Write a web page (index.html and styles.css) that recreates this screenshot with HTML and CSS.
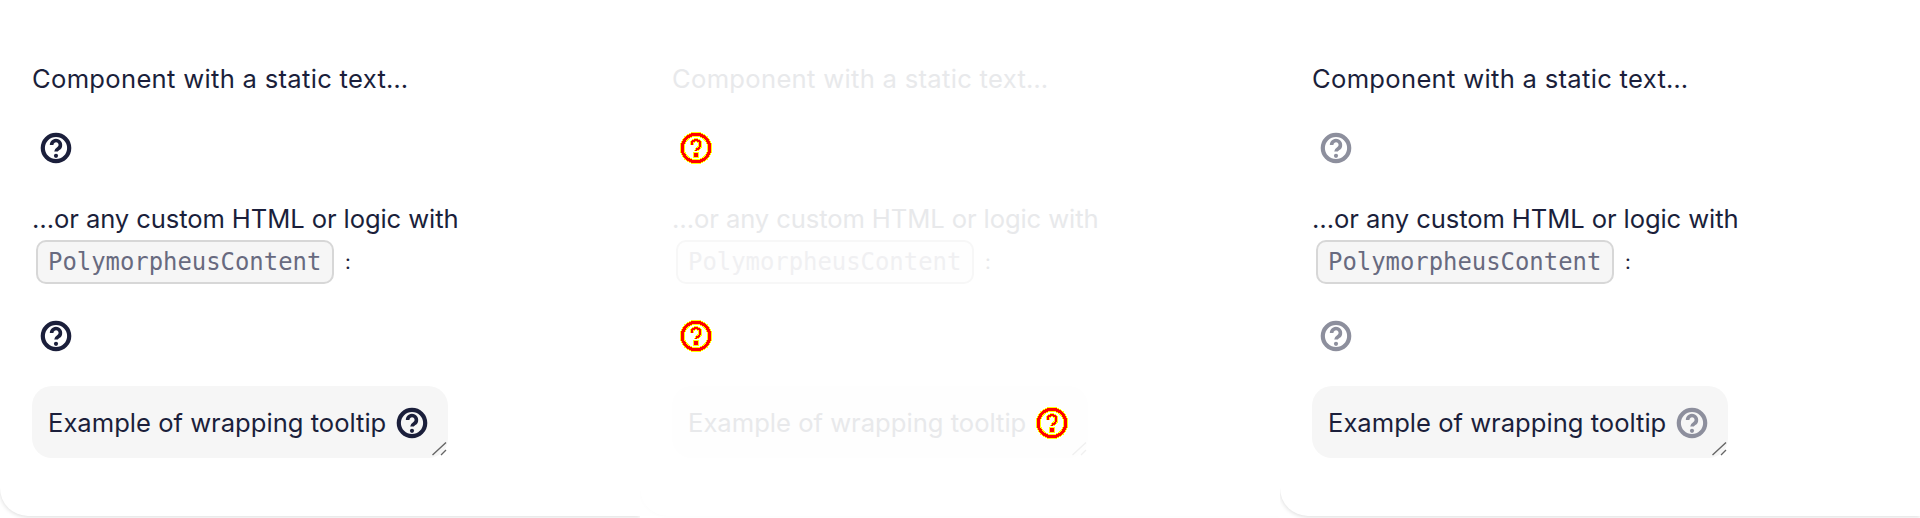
FILE: index.html
```html
<!DOCTYPE html>
<html lang="en">
<head>
    <meta charset="UTF-8">
    <title>Hint</title>
    <link rel="stylesheet" href="styles.css">
</head>
<body>
<svg class="sprite" xmlns="http://www.w3.org/2000/svg">
    <symbol id="help" viewBox="0 0 32 32">
        <circle cx="16" cy="16" r="13.2" fill="none" stroke="currentColor" stroke-width="4.2"/>
        <path d="M11.6 13a4.4 4.4 0 1 1 6.8 3.6c-1.5 1-2.4 1.6-2.4 3" fill="none" stroke="currentColor" stroke-width="3.6"/>
        <circle cx="16" cy="23.8" r="2.1" fill="currentColor"/>
    </symbol>
    <symbol id="help-forced" viewBox="0 0 32 32">
        <circle cx="16" cy="16" r="13.8" fill="none" stroke="#ff0" stroke-width="5" shape-rendering="crispEdges"/>
        <circle cx="16" cy="16" r="13.8" fill="none" stroke="#f00" stroke-width="3" shape-rendering="crispEdges"/>
        <path d="M11.6 12.6a4.4 4.4 0 1 1 6.8 3.6c-1.5 1-2.4 1.6-2.4 3" fill="none" stroke="#ff0" stroke-width="4" shape-rendering="crispEdges"/>
        <path d="M11.6 12.6a4.4 4.4 0 1 1 6.8 3.6c-1.5 1-2.4 1.6-2.4 3" fill="none" stroke="#f00" stroke-width="2.2" shape-rendering="crispEdges"/>
        <rect x="13" y="20" width="6" height="6" fill="#ff0" shape-rendering="crispEdges"/>
        <rect x="14" y="21" width="4" height="4" fill="#f00" shape-rendering="crispEdges"/>
    </symbol>
</svg>

<div class="panels">
    <!-- normal -->
    <div class="cell">
        <div class="panel">
            <p class="line line-static">Component with a static text…</p>
            <svg class="hint hint-first"><use href="#help"/></svg>
            <p class="line line-custom">…or any custom HTML or logic with</p>
            <p class="code-row"><code class="code">PolymorpheusContent</code><span class="colon">:</span></p>
            <svg class="hint hint-second"><use href="#help"/></svg>
            <div class="box">
                <span class="box-text">Example of wrapping tooltip</span>
                <svg class="hint-inline"><use href="#help"/></svg>
                <svg class="grip" viewBox="0 0 16 16"><path d="M.5 13 14 .5M9 13l5-5"/></svg>
            </div>
        </div>
    </div>

    <!-- disabled -->
    <div class="cell">
        <div class="panel panel-disabled">
            <p class="line line-static">Component with a static text…</p>
            <svg class="hint hint-first"><use href="#help-forced"/></svg>
            <p class="line line-custom">…or any custom HTML or logic with</p>
            <p class="code-row"><code class="code">PolymorpheusContent</code><span class="colon">:</span></p>
            <svg class="hint hint-second"><use href="#help-forced"/></svg>
            <div class="box">
                <span class="box-text">Example of wrapping tooltip</span>
                <svg class="hint-inline"><use href="#help-forced"/></svg>
                <svg class="grip" viewBox="0 0 16 16"><path d="M.5 13 14 .5M9 13l5-5"/></svg>
            </div>
        </div>
    </div>

    <!-- muted icons -->
    <div class="cell">
        <div class="panel panel-muted">
            <p class="line line-static">Component with a static text…</p>
            <svg class="hint hint-first"><use href="#help"/></svg>
            <p class="line line-custom">…or any custom HTML or logic with</p>
            <p class="code-row"><code class="code">PolymorpheusContent</code><span class="colon">:</span></p>
            <svg class="hint hint-second"><use href="#help"/></svg>
            <div class="box">
                <span class="box-text">Example of wrapping tooltip</span>
                <svg class="hint-inline"><use href="#help"/></svg>
                <svg class="grip" viewBox="0 0 16 16"><path d="M.5 13 14 .5M9 13l5-5"/></svg>
            </div>
        </div>
    </div>
</div>
</body>
</html>
```

FILE: styles.css
```css
* {
    margin: 0;
    padding: 0;
    box-sizing: border-box;
}

body {
    background-color: #fff;
    color: #1b1f3b;
    font-family: Inter, "Noto Sans", sans-serif;
    overflow: hidden;
}

.sprite {
    display: none;
}

.panels {
    display: grid;
    grid-template-columns: repeat(3, 640px);
    height: 518px;
}

/* clips the shadow of the panel to its own column */
.cell {
    overflow: hidden;
    height: 518px;
}

.panel {
    height: 516px;
    padding: 64px 0 0 32px;
    background-color: #fff;
    border-radius: 0 0 0 28px;
    box-shadow: 0 1px 4px rgba(0, 0, 0, 0.14);
}

.line {
    height: 30px;
    font-size: 25.6px;
    line-height: 30px;
    letter-spacing: -0.1px;
}

.line-static {
    letter-spacing: 0.3px;
}

.hint {
    display: block;
    width: 32px;
    height: 32px;
    margin-left: 8px;
}

.hint-first {
    margin-top: 38px;
}

.line-custom {
    margin-top: 40px;
}

.code-row {
    display: flex;
    align-items: center;
    height: 44px;
    margin-top: 6px;
}

.code {
    display: block;
    width: 298px;
    height: 44px;
    margin-left: 4px;
    padding-left: 10px;
    font-family: "DejaVu Sans Mono", monospace;
    font-size: 23.9px;
    line-height: 40px;
    color: #686a7f;
    background-color: #f6f6f6;
    border: 2px solid #d7d7d7;
    border-radius: 10px;
}

.colon {
    margin-left: 11px;
    font-size: 20px;
}

.hint-second {
    margin-top: 36px;
}

.box {
    position: relative;
    display: flex;
    align-items: center;
    width: 416px;
    height: 72px;
    margin-top: 34px;
    padding-left: 16px;
    font-size: 25.6px;
    background-color: #f6f6f6;
    border-radius: 20px;
}

.box-text {
    margin-top: 1px;
}

.hint-inline {
    width: 32px;
    height: 32px;
    margin-left: 10px;
    margin-top: 1px;
}

/* resize handle in the corner */
.grip {
    position: absolute;
    right: 0;
    bottom: 0;
    width: 16px;
    height: 16px;
    fill: none;
    stroke: #666;
    stroke-width: 1.4;
}

/* disabled: everything but the icons is almost gone */
.panel-disabled {
    color: #e8e9eb;
    box-shadow: 0 1px 4px rgba(0, 0, 0, 0.014);
}

.panel-disabled .code {
    color: #f0f0f2;
    background-color: #fefefe;
    border-color: #f7f7f7;
}

.panel-disabled .box {
    background-color: #fefefe;
}

.panel-disabled .grip {
    stroke: #f0f0f0;
}

.panel-muted .hint,
.panel-muted .hint-inline {
    color: #8d8f9d;
}
```
